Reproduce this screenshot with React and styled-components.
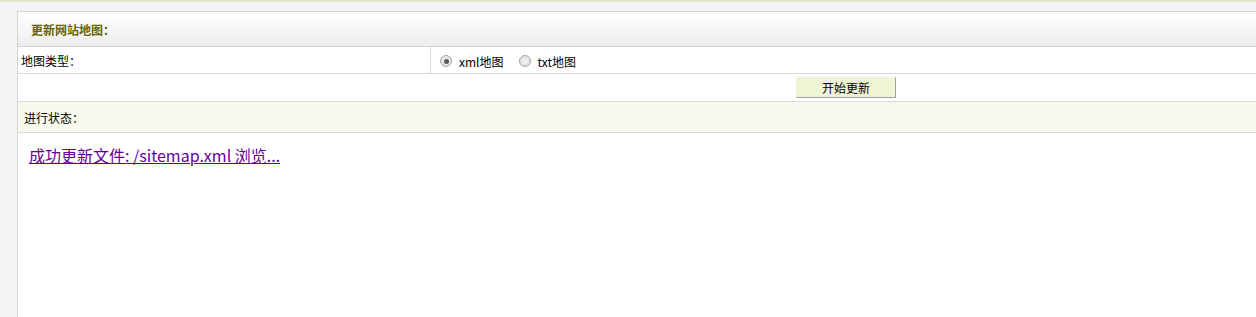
import React from "react";
import styled, { createGlobalStyle } from "styled-components";

const GlobalStyle = createGlobalStyle`
  html, body {
    margin: 0;
    padding: 0;
    background: #f4f4f4;
    overflow: hidden;
  }
  body {
    border-top: 2px solid #dde9c6;
    font-family: "Microsoft YaHei", "Noto Sans CJK SC", sans-serif;
    font-size: 12px;
    color: #000;
  }
`;

const Panel = styled.div`
  box-sizing: border-box;
  margin: 9px 0 0 17px;
  width: 1239px;
  height: 306px;
  background: #fff;
  border-left: 1px solid #d4d4d4;
  border-top: 1px solid #d4d4d4;
`;

const Header = styled.div`
  height: 34px;
  display: flex;
  align-items: center;
  padding-left: 13px;
  background: linear-gradient(#ffffff, #ededed);
  border-bottom: 1px solid #d4d4d4;
  font-weight: bold;
  color: #666600;
`;

const Row = styled.div`
  display: grid;
  grid-template-columns: ${p => p.cols || "1fr"};
  height: ${p => p.h}px;
  border-bottom: 1px solid #d8d8d8;
  background: ${p => p.bg || "#fff"};
`;

const Cell = styled.div`
  display: flex;
  align-items: center;
  padding-left: ${p => p.pad || 0}px;
  border-right: ${p => (p.divider ? "1px solid #d8d8d8" : "none")};
`;

const RadioLabel = styled.label`
  display: inline-flex;
  align-items: center;
  margin-right: 15px;
  padding-top: 2px;
`;

const Radio = styled.span`
  width: 12px;
  height: 12px;
  border-radius: 50%;
  border: 1px solid #a6a6a6;
  background: radial-gradient(#f4f4f4, #d9d9d9);
  box-sizing: border-box;
  margin-right: 7px;
  display: inline-flex;
  align-items: center;
  justify-content: center;
  &::after {
    content: "";
    width: 5px;
    height: 5px;
    border-radius: 50%;
    background: ${p => (p.checked ? "#5a5a5a" : "transparent")};
  }
`;

const Button = styled.button`
  width: 100px;
  height: 21px;
  padding: 0;
  font-family: inherit;
  font-size: 12px;
  color: #000;
  background: #eef5d2;
  border: 1px solid;
  border-color: #eef5d2 #a0a0a0 #a0a0a0 #eef5d2;
`;

const Content = styled.div`
  padding: 10px 0 0 11px;
`;

const Link = styled.a`
  font-size: 16px;
  color: #660099;
  text-decoration: underline;
`;

export default function App() {
  return (
    <>
      <GlobalStyle />
      <Panel>
        <Header>更新网站地图：</Header>
        <Row h={26} cols="413px 1fr">
          <Cell pad={3} divider>地图类型：</Cell>
          <Cell pad={9}>
            <RadioLabel>
              <Radio checked />
              xml地图
            </RadioLabel>
            <RadioLabel>
              <Radio />
              txt地图
            </RadioLabel>
          </Cell>
        </Row>
        <Row h={27} cols="778px 1fr">
          <Cell />
          <Cell>
            <Button>开始更新</Button>
          </Cell>
        </Row>
        <Row h={30} bg="#f8f9ed">
          <Cell pad={6}>进行状态：</Cell>
        </Row>
        <Content>
          <Link href="#">成功更新文件: /sitemap.xml 浏览...</Link>
        </Content>
      </Panel>
    </>
  );
}
